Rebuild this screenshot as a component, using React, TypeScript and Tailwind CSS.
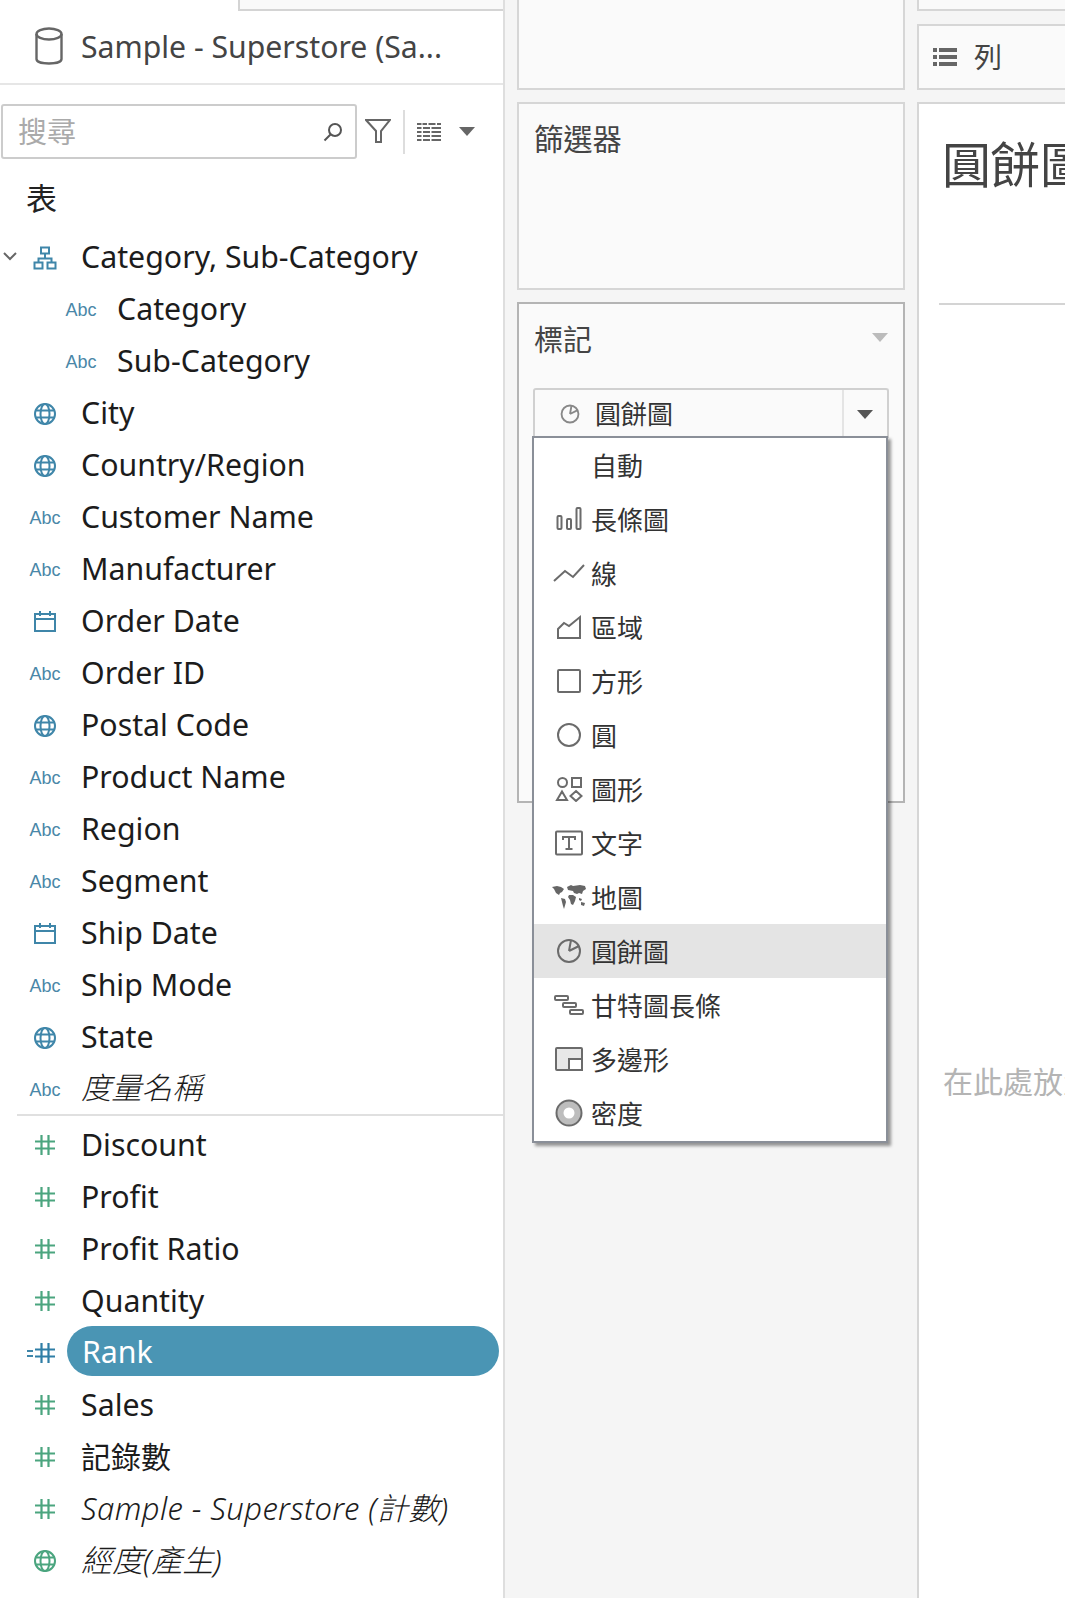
import React from "react";

const Abc = () => <span className="text-[18px] leading-none text-[#4a87a8] font-['Liberation_Sans',sans-serif]">Abc</span>;
const Hash = ({ color = "#4ba57f" }: { color?: string }) => (
  <svg width="22" height="22" viewBox="0 0 22 22" fill="none" stroke={color} strokeWidth="2.2">
    <path d="M7.5 1v20M14.5 1v20M1 7.5h20M1 14.5h20" />
  </svg>
);
const Globe = ({ color = "#3f86a9" }: { color?: string }) => (
  <svg width="24" height="24" viewBox="0 0 24 24" fill="none" stroke={color} strokeWidth="2">
    <circle cx="12" cy="12" r="10" />
    <ellipse cx="12" cy="12" rx="4.5" ry="10" />
    <path d="M2 8.5h20M2 15.5h20" />
  </svg>
);
const Cal = () => (
  <svg width="24" height="24" viewBox="0 0 24 24" fill="none" stroke="#3f86a9" strokeWidth="2">
    <rect x="2" y="4" width="20" height="17" />
    <path d="M2 9h20M7 1v5M17 1v5" />
  </svg>
);
const Tree = () => (
  <svg width="24" height="24" viewBox="0 0 24 24" fill="none" stroke="#3f86a9" strokeWidth="2">
    <rect x="8" y="1.5" width="8" height="6" />
    <rect x="1.5" y="16.5" width="8" height="6" />
    <rect x="14.5" y="16.5" width="8" height="6" />
    <path d="M12 7.5v5M5.5 16.5v-4h13v4" />
  </svg>
);
const Caret = ({ className, color }: { className?: string; color: string }) => (
  <svg width="16" height="9" viewBox="0 0 16 9" className={className}>
    <path d="M0 0h16L8 9z" fill={color} />
  </svg>
);

const Row = ({ icon, children, sub, text = "text-[30.3px] pb-[2px]" }: { icon: React.ReactNode; children: React.ReactNode; sub?: boolean; text?: string }) => (
  <div className={`flex items-center h-[52px] ${sub ? "pl-[63px]" : "pl-[27px]"}`}>
    <div className="w-[36px] flex justify-center shrink-0">{icon}</div>
    <span className={`ml-[18px] leading-none text-[#1c1c1c] whitespace-nowrap ${text}`}>{children}</span>
  </div>
);

const dims: [string, React.ReactNode][] = [
  ["City", <Globe />],
  ["Country/Region", <Globe />],
  ["Customer Name", <Abc />],
  ["Manufacturer", <Abc />],
  ["Order Date", <Cal />],
  ["Order ID", <Abc />],
  ["Postal Code", <Globe />],
  ["Product Name", <Abc />],
  ["Region", <Abc />],
  ["Segment", <Abc />],
  ["Ship Date", <Cal />],
  ["Ship Mode", <Abc />],
  ["State", <Globe />],
];

const g = { fill: "none", stroke: "#6b6b6b", strokeWidth: 2 };
const PieIcon = ({ size = 26, color = "#6b6b6b" }: { size?: number; color?: string }) => (
  <svg width={size} height={size} viewBox="0 0 26 26" fill="none" stroke={color} strokeWidth={size < 26 ? 2.4 : 2}>
    <circle cx="13" cy="13" r="11" />
    <path d="M13 13l2-11M13 13l10-5" />
  </svg>
);
const menu: [string, React.ReactNode][] = [
  ["自動", null],
  ["長條圖", <svg width="26" height="24" viewBox="0 0 26 24" {...g}><rect x="1.5" y="9" width="4" height="13" rx="1" /><rect x="11" y="12" width="4" height="10" rx="1" /><rect x="20.5" y="1" width="4" height="21" rx="1" /></svg>],
  ["線", <svg width="32" height="20" viewBox="0 0 32 20" {...g}><path d="M1 18l11-10 8 6L31 2" /></svg>],
  ["區域", <svg width="26" height="26" viewBox="0 0 26 26" {...g}><path d="M2 24h22V3L13 12 8 9 2 15z" /></svg>],
  ["方形", <svg width="26" height="26" viewBox="0 0 26 26" {...g}><rect x="2" y="2" width="22" height="22" rx="1" /></svg>],
  ["圓", <svg width="26" height="26" viewBox="0 0 26 26" {...g}><circle cx="13" cy="13" r="11" /></svg>],
  ["圖形", <svg width="28" height="26" viewBox="0 0 28 26" {...g}><circle cx="7.5" cy="6.5" r="4.5" /><rect x="17" y="2" width="9" height="9" /><path d="M7 15.5l5 8.5H2zM21 15l5.5 5-5.5 5-5.5-5z" /></svg>],
  ["文字", <svg width="28" height="26" viewBox="0 0 28 26" {...g}><rect x="1" y="1.5" width="26" height="23" rx="1" /><path d="M8 10V7h12v3M14 7v12M10.5 19h7" /></svg>],
  ["地圖", <svg width="34" height="24" viewBox="0 0 34 24" fill="#666"><path d="M0 2l5-1 4 1 3 2-2 3-2 1-1 2-3-2-2-4zM9 13l4 1 1 3-2 7-1-3zM15 2l4-2 2 1 7-1 5 1 1 3-3 2-1 3-3-1-2 1-3-1-1-2-5-1-1-3zM17 10l4 0 3 2-1 4-2 4-2-1-1-4-2-3zM27 13l3 1-1 2-2-1zM29 17l4 1-1 3-3-1z" /></svg>],
  ["圓餅圖", <PieIcon />],
  ["甘特圖長條", <svg width="30" height="20" viewBox="0 0 30 20" {...g}><rect x="1" y="1" width="13" height="4" rx="1" /><rect x="9" y="8" width="13" height="4" rx="1" /><rect x="16" y="15" width="13" height="4" rx="1" /></svg>],
  ["多邊形", <svg width="28" height="24" viewBox="0 0 28 24"><rect x="1" y="1" width="26" height="22" rx="1" fill="#e8e8e8" stroke="#6b6b6b" strokeWidth="2" /><path d="M14 23V12h13v11z" fill="#fff" stroke="#6b6b6b" strokeWidth="2" /></svg>],
  ["密度", <svg width="28" height="28" viewBox="0 0 28 28"><circle cx="14" cy="14" r="12.5" fill="#bdbdbd" stroke="#6b6b6b" strokeWidth="2" /><circle cx="14" cy="14" r="5.5" fill="#fff" /></svg>],
];

const M = "text-[30.3px]";

export default function App() {
  return (
    <div className="flex w-[1065px] h-[1598px] overflow-hidden bg-[#f5f5f5] font-['Noto_Sans','Noto_Sans_CJK_TC',sans-serif]">
      {/* Left data pane */}
      <div className="w-[505px] shrink-0 bg-white border-r-[2px] border-[#dedede]">
        <div className="flex justify-end">
          <div className="w-[265px] h-[11px] bg-[#f9f9f9] border-l-[2px] border-b-[2px] border-[#d4d4d4]" />
        </div>
        <div className="h-[74px] border-b-[2px] border-[#e6e6e6] flex items-center pl-[35px]">
          <svg className="mb-[2px]" width="28" height="38" viewBox="0 0 28 38" fill="none" stroke="#666" strokeWidth="2.4">
            <path d="M1.5 7v25c0 6 25 6 25 0V7" />
            <ellipse cx="14" cy="7" rx="12.5" ry="5.5" />
          </svg>
          <span className="ml-[18px] text-[30.2px] leading-none text-[#444] whitespace-nowrap">Sample - Superstore (Sa...</span>
        </div>
        <div className="mt-[19px] h-[55px] flex items-center">
          <div className="ml-[1px] w-[356px] h-[55px] border-[2px] border-[#cccccc] rounded-[3px] flex items-center justify-between pl-[15px] pr-[12px]">
            <span className="text-[29px] leading-none text-[#aaaaaa]">搜尋</span>
            <svg width="20" height="20" viewBox="0 0 20 20" fill="none" stroke="#555" strokeWidth="2">
              <circle cx="12" cy="8" r="6" />
              <path d="M7.5 12.5L1.5 18.5" />
            </svg>
          </div>
          <svg className="ml-[8px]" width="26" height="25" viewBox="0 0 26 25" fill="none" stroke="#666" strokeWidth="2">
            <path d="M1 1h24L16 12v11h-5V12z" />
          </svg>
          <div className="ml-[12px] w-[2px] h-[44px] bg-[#dddddd]" />
          <svg className="ml-[12px]" width="24" height="18" viewBox="0 0 24 18" fill="none" stroke="#666" strokeWidth="2">
            <path d="M0 1h4.5M5.5 1h18.5M0 5h24M0 9h24M0 13h24M0 17h24" strokeDasharray="4.5 1.5 7 1.5 9.5 0" />
          </svg>
          <Caret className="ml-[18px]" color="#666" />
        </div>
        <div className="mt-[13px] h-[52px] flex items-center pl-[26px] text-[31px] leading-none text-[#222] mb-[8px]">表</div>
        <div className="relative">
          <svg className="absolute left-[3px] top-[20px]" width="14" height="9" viewBox="0 0 14 9" fill="none" stroke="#666" strokeWidth="2"><path d="M1 1l6 6 6-6" /></svg>
          <Row icon={<Tree />}>Category, Sub-Category</Row>
        </div>
        <Row sub icon={<Abc />}>Category</Row>
        <Row sub icon={<Abc />}>Sub-Category</Row>
        {dims.map(([t, i]) => (
          <Row key={t} icon={i}>{t}</Row>
        ))}
        <Row text="text-[30.3px] italic font-light pb-[4px]" icon={<Abc />}>度量名稱</Row>
        <div className="ml-[17px] -mt-[2px] h-[2px] bg-[#e0e0e0]" />
        <div className="mt-[3px]">
          <Row text={M} icon={<Hash />}>Discount</Row>
          <Row text={M} icon={<Hash />}>Profit</Row>
          <Row text={M} icon={<Hash />}>Profit Ratio</Row>
          <Row text={M} icon={<Hash />}>Quantity</Row>
          <div className="h-[52px] flex items-center pl-[27px]">
            <div className="w-[36px] flex items-center justify-end shrink-0 pr-[7px]">
              <span className="flex flex-col gap-[3px] mr-[1px]"><span className="block w-[6px] h-[2px] bg-[#3f86a9]" /><span className="block w-[6px] h-[2px] bg-[#3f86a9]" /></span>
              <Hash color="#2f7ea6" />
            </div>
            <div className="ml-[4px] mb-[4px] w-[432px] h-[50px] rounded-[25px] bg-[#4a95b4] flex items-center pl-[15px] pt-[3px] text-[30.3px] leading-none text-white">Rank</div>
          </div>
          <Row text={M} icon={<Hash />}>Sales</Row>
          <Row text="text-[30px]" icon={<Hash />}>記錄數</Row>
          <Row text="text-[31px] italic font-light pb-[2px] tracking-[0.4px]" icon={<Hash />}>Sample - Superstore (計數)</Row>
          <Row text="text-[31px] italic font-light pb-[2px]" icon={<Globe color="#4ba57f" />}>經度(產生)</Row>
        </div>
      </div>

      {/* Middle shelf column */}
      <div className="w-[388px] ml-[12px] shrink-0 flex flex-col">
        <div className="h-[90px] bg-[#fafafa] border-[2px] border-t-0 border-[#d6d6d6]" />
        <div className="mt-[12px] h-[188px] bg-[#fafafa] border-[2px] border-[#d6d6d6] pl-[15px] pt-[17px]">
          <span className="text-[29.3px] leading-[36px] text-[#444]">篩選器</span>
        </div>
        <div className="relative mt-[12px] h-[501px] bg-[#fafafa] border-[2px] border-[#b4b4b4] pl-[15px] pr-[14px]">
          <div className="flex items-center justify-between h-[70px] pr-[2px]">
            <span className="text-[29px] leading-none text-[#444]">標記</span>
            <Caret className="mb-[4px] mr-[-1px]" color="#bbbbbb" />
          </div>
          <div className="mt-[14px] -ml-[1px] h-[50px] w-[356px] border-[2px] border-b-0 border-[#d0d0d0] rounded-t-[3px] flex items-center">
            <div className="w-[309px] h-full flex items-center pl-[25px] border-r-[2px] border-[#e4e4e4]">
              <PieIcon size={20} color="#888" />
              <span className="ml-[15px] text-[26px] leading-none text-[#333] pb-[1px]">圓餅圖</span>
            </div>
            <Caret className="ml-[13px]" color="#555" />
          </div>
          <div className="absolute left-[13px] top-[132px] w-[356px] h-[707px] bg-white border-[2px] border-[#8a8f98] shadow-[3px_3px_3px_rgba(0,0,0,0.4)] z-10">
            {menu.map(([t, i]) => (
              <div key={t} className={`h-[54px] flex items-center ${t === "圓餅圖" ? "bg-[#e4e4e4]" : ""}`}>
                <div className="w-[56px] ml-[1px] pl-[12px] flex justify-center shrink-0">{i}</div>
                <span className="text-[26px] leading-none text-[#333] pt-[1px]">{t}</span>
              </div>
            ))}
          </div>
        </div>
      </div>

      {/* Right view column */}
      <div className="flex-1 ml-[12px] min-w-0 flex flex-col">
        <div className="h-[11px] bg-[#fafafa] border-[2px] border-t-0 border-r-0 border-[#d6d6d6]" />
        <div className="mt-[13px] h-[66px] bg-[#fafafa] border-[2px] border-r-0 border-[#d6d6d6] flex items-center pl-[14px]">
          <svg width="24" height="20" viewBox="0 0 24 20" fill="#666">
            <path d="M0 1h4v4H0zM6 1h18v4H6zM0 8h4v4H0zM6 8h18v4H6zM0 15h4v4H0zM6 15h18v4H6z" />
          </svg>
          <span className="ml-[17px] text-[28px] leading-none text-[#444]">列</span>
        </div>
        <div className="mt-[12px] flex-1 bg-white border-[2px] border-r-0 border-b-0 border-[#d6d6d6] overflow-hidden">
          <div className="ml-[20px] h-[201px] border-b-[2px] border-[#d4d4d4] pl-[3px] pt-[30px] text-[49px] leading-[60px] text-[#444] whitespace-nowrap">圓餅圖</div>
          <div className="ml-[24px] mt-[762px] text-[30px] leading-none text-[#b4b4b4] whitespace-nowrap">在此處放置欄位</div>
        </div>
      </div>
    </div>
  );
}
